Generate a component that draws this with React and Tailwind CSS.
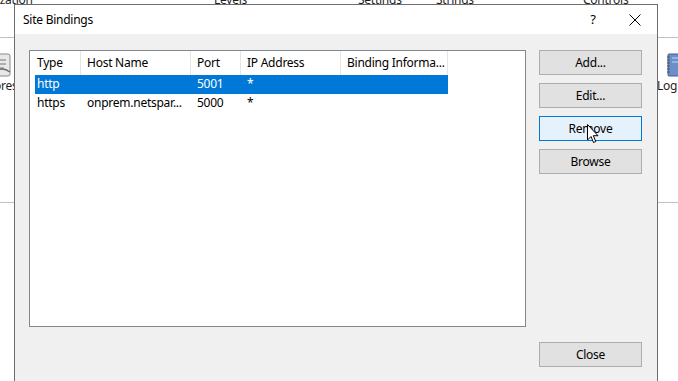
import React from 'react';

const font = { fontFamily: '"Noto Sans", "Open Sans", sans-serif' };

function Button({ label, hover }) {
  return (
    <div
      className={
        'w-[103px] h-[25px] flex items-center justify-center text-[12px] text-black border ' +
        (hover ? 'bg-[#e5f1fb] border-[#0078d7]' : 'bg-[#e1e1e1] border-[#adadad]')
      }
    >
      {label}
    </div>
  );
}

function Cursor() {
  return (
    <svg className="absolute left-[587px] top-[124px]" width="13" height="20" viewBox="0 0 13 20">
      <path
        d="M0.5 0.5 L0.5 16 L4 12.5 L6.5 18.5 L8.8 17.5 L6.3 11.7 L11 11.7 Z"
        fill="#fff"
        stroke="#000"
        strokeWidth="1"
        strokeLinejoin="miter"
      />
    </svg>
  );
}

const cols = [
  { label: 'Type', w: 'w-[51px]', pad: 'pl-[7px]' },
  { label: 'Host Name', w: 'w-[110px]', pad: 'pl-[6px]' },
  { label: 'Port', w: 'w-[50px]', pad: 'pl-[6px]' },
  { label: 'IP Address', w: 'w-[100px]', pad: 'pl-[6px]' },
  { label: 'Binding Informa...', w: 'w-[107px]', pad: 'pl-[6px]' },
];

const rows = [
  ['http', '', '5001', '*', ''],
  ['https', 'onprem.netspar...', '5000', '*', ''],
];

export default function App() {
  return (
    <div className="relative w-[678px] h-[381px] bg-white overflow-hidden tracking-[-0.25px]" style={font}>
      {/* IIS feature view behind the dialog */}
      <div className="absolute top-[-9px] left-0 w-full text-[12px] text-[#1e1e1e]">
        <span className="absolute left-[-6px]">lization</span>
        <span className="absolute left-[214px]">Levels</span>
        <span className="absolute left-[358px]">Settings</span>
        <span className="absolute left-[436px]">Strings</span>
        <span className="absolute left-[583px]">Controls</span>
      </div>
      <div className="absolute top-[37px] left-0 w-full h-px bg-[#b9c4d0]" />
      <div className="absolute top-[202px] left-0 w-full h-px bg-[#b9c4d0]" />
      <svg className="absolute left-[-10px] top-[52px]" width="24" height="26" viewBox="0 0 24 26">
        <rect x="2" y="2" width="18" height="22" rx="2" fill="#e8e8e8" stroke="#8a8a8a" />
        <path d="M6 8 L16 8 M6 12 L16 12 M6 16 L14 16" stroke="#9a9a9a" strokeWidth="1.5" />
        <path d="M4 20 Q12 14 20 20" stroke="#6d6d6d" strokeWidth="1.5" fill="none" />
      </svg>
      <span className="absolute left-[-6px] top-[77px] text-[12px] text-[#1e1e1e]">ores</span>
      <svg className="absolute left-[665px] top-[52px]" width="20" height="26" viewBox="0 0 20 26">
        <rect x="3" y="2" width="14" height="22" rx="1" fill="#6b8fc9" stroke="#3e5f99" />
        <path d="M2 5 H5 M2 8 H5 M2 11 H5 M2 14 H5 M2 17 H5 M2 20 H5" stroke="#555" strokeWidth="1" />
        <path d="M7 6 H15 M7 10 H15" stroke="#c6d6f0" strokeWidth="1" />
      </svg>
      <span className="absolute left-[657px] top-[77px] text-[12px] text-[#1e1e1e]">Log</span>

      {/* Site Bindings dialog */}
      <div className="absolute left-[14px] top-[4px] w-[644px] h-[400px] border border-[#6e6e6e] bg-[#f0f0f0] flex flex-col">
        <div className="h-[29px] bg-white flex items-center pl-[8px] shrink-0">
          <span className="text-[12px] text-black">Site Bindings</span>
          <span className="ml-auto text-[13px] text-black w-[20px] text-center mr-[26px]">?</span>
          <svg className="mr-[16px]" width="12" height="12" viewBox="0 0 12 12">
            <path d="M0.5 0.5 L11.5 11.5 M11.5 0.5 L0.5 11.5" stroke="#000" strokeWidth="1" />
          </svg>
        </div>

        <div className="flex pl-[14px] pt-[16px]">
          <div className="w-[497px] h-[277px] bg-white border border-[#828790] flex flex-col text-[12px] text-black">
            <div className="flex h-[24px] items-stretch">
              {cols.map((c) => (
                <div
                  key={c.label}
                  className={c.w + ' ' + c.pad + ' flex items-center border-r border-[#e5e5e5] whitespace-nowrap overflow-hidden'}
                >
                  {c.label}
                </div>
              ))}
            </div>
            <div className="flex flex-col pl-[5px]">
              {rows.map((r, i) => (
                <div
                  key={i}
                  className={
                    'flex h-[18.5px] items-center w-[413px] ' + (i === 0 ? 'bg-[#0078d7] text-white' : '')
                  }
                >
                  <div className="w-[46px] pl-[2px]">{r[0]}</div>
                  <div className="w-[110px] pl-[6px] whitespace-nowrap">{r[1]}</div>
                  <div className="w-[50px] pl-[6px]">{r[2]}</div>
                  <div className="w-[100px] pl-[6px]">{r[3]}</div>
                  <div className="w-[107px] pl-[6px]">{r[4]}</div>
                </div>
              ))}
            </div>
          </div>

          <div className="ml-[13px] flex flex-col">
            <div className="flex flex-col gap-[8px]">
              <Button label="Add..." />
              <Button label="Edit..." />
              <Button label="Remove" hover />
              <Button label="Browse" />
            </div>
          </div>
        </div>

        <div className="flex justify-end pr-[15px] pt-[15px]">
          <Button label="Close" />
        </div>
      </div>

      <Cursor />
    </div>
  );
}
